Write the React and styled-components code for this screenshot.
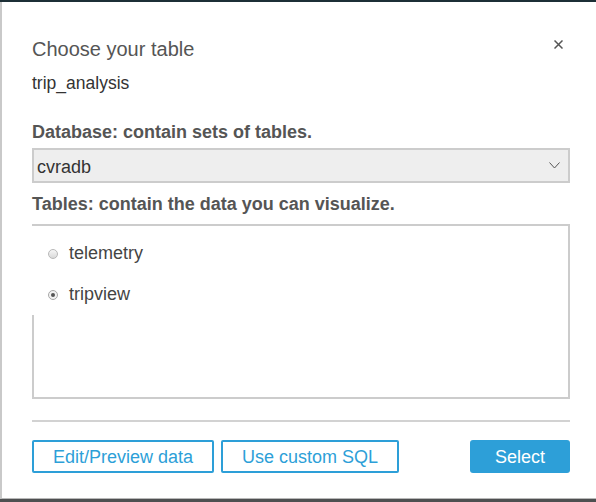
import React from "react";
import styled, { createGlobalStyle } from "styled-components";

const GlobalStyle = createGlobalStyle`
  * { box-sizing: border-box; }
  body {
    margin: 0;
    background: #4d4f50;
    font-family: "Liberation Sans", Arial, sans-serif;
  }
`;

const tables = [
  { name: "telemetry", checked: false },
  { name: "tripview", checked: true },
];

function App() {
  return (
    <Page>
      <GlobalStyle />
      <Modal>
        <Header>
          <Title>Choose your table</Title>
          <CloseButton aria-label="Close">
            <svg width="9" height="9" viewBox="0 0 9 9">
              <path d="M0.5 0.5 L8.5 8.5 M8.5 0.5 L0.5 8.5" stroke="#555" strokeWidth="1.5" />
            </svg>
          </CloseButton>
        </Header>
        <SubTitle>trip_analysis</SubTitle>

        <Label>Database: contain sets of tables.</Label>
        <SelectBox>
          <span>cvradb</span>
          <svg width="11" height="7" viewBox="0 0 11 7">
            <path d="M0.5 0.5 L5.5 6 L10.5 0.5" fill="none" stroke="#555" strokeWidth="1" />
          </svg>
        </SelectBox>

        <Label $tight>Tables: contain the data you can visualize.</Label>
        <ListBox>
          <Options>
            {tables.map((t) => (
              <Option key={t.name}>
                <Radio $checked={t.checked} />
                <span>{t.name}</span>
              </Option>
            ))}
          </Options>
        </ListBox>

        <Divider />

        <Footer>
          <OutlineButton>Edit/Preview data</OutlineButton>
          <OutlineButton>Use custom SQL</OutlineButton>
          <Spacer />
          <PrimaryButton>Select</PrimaryButton>
        </Footer>
      </Modal>
    </Page>
  );
}

export default App;

const Page = styled.div`
  height: 502px;
  border-top: 2px solid #1c2f36;
  display: flex;
  flex-direction: column;
`;

const Modal = styled.div`
  height: 497px;
  background: #fff;
  border-left: 2px solid #c9c9c9;
  border-bottom: 1px solid #b8b8b8;
  padding: 35px 26px 0 30px;
  display: flex;
  flex-direction: column;
`;

const Header = styled.div`
  display: flex;
  justify-content: space-between;
  align-items: flex-start;
`;

const Title = styled.div`
  font-size: 20px;
  line-height: 24px;
  color: #555;
`;

const CloseButton = styled.button`
  border: none;
  background: none;
  padding: 0;
  margin: 3px 7px 0 0;
  width: 9px;
  height: 9px;
  display: flex;
  cursor: pointer;
`;

const SubTitle = styled.div`
  margin-top: 12px;
  font-size: 17.5px;
  line-height: 20px;
  color: #333;
`;

const Label = styled.div`
  margin-top: ${(p) => (p.$tight ? "10px" : "28px")};
  font-size: 18px;
  line-height: 22px;
  font-weight: bold;
  color: #555;
`;

const SelectBox = styled.div`
  margin-top: 5px;
  height: 35px;
  border: 2px solid #ccc;
  background: #eee;
  padding: 3px 8px 0 3px;
  display: flex;
  align-items: center;
  justify-content: space-between;
  font-size: 18px;
  color: #333;

  svg {
    margin-top: -3px;
  }
`;

const ListBox = styled.div`
  margin-top: 9px;
  height: 175px;
  border: 2px solid #ccc;
`;

const Options = styled.div`
  margin-left: -2px;
  background: #fff;
  padding: 16px 0 10px 16px;
  display: flex;
  flex-direction: column;
  gap: 19px;
`;

const Option = styled.label`
  display: flex;
  align-items: center;
  gap: 11px;
  font-size: 18px;
  line-height: 22px;
  color: #444;
`;

const Radio = styled.span`
  position: relative;
  width: 10px;
  height: 10px;
  margin-top: 1px;
  border-radius: 50%;
  border: 1px solid ${(p) => (p.$checked ? "#a8a8a8" : "#b8b8b8")};
  background: ${(p) =>
    p.$checked ? "#f2f2f2" : "linear-gradient(#f6f6f6, #d9d9d9)"};

  &::after {
    content: "";
    display: ${(p) => (p.$checked ? "block" : "none")};
    position: absolute;
    left: 2px;
    top: 2px;
    width: 4px;
    height: 4px;
    border-radius: 50%;
    background: #555;
  }
`;

const Divider = styled.div`
  margin-top: 21px;
  height: 2px;
  background: #d2d2d2;
`;

const Footer = styled.div`
  margin-top: 18px;
  display: flex;
  gap: 7px;
`;

const Spacer = styled.div`
  flex: 1;
`;

const OutlineButton = styled.button`
  height: 33px;
  padding: 2px 19px 0;
  border: 2px solid #2d9fd8;
  border-radius: 2px;
  background: #fff;
  color: #2d9fd8;
  font-family: inherit;
  font-size: 18px;
  cursor: pointer;
`;

const PrimaryButton = styled.button`
  height: 33px;
  width: 100px;
  padding: 2px 0 0;
  border: none;
  border-radius: 3px;
  background: #2d9fd8;
  color: #fff;
  font-family: inherit;
  font-size: 18px;
  cursor: pointer;
`;
